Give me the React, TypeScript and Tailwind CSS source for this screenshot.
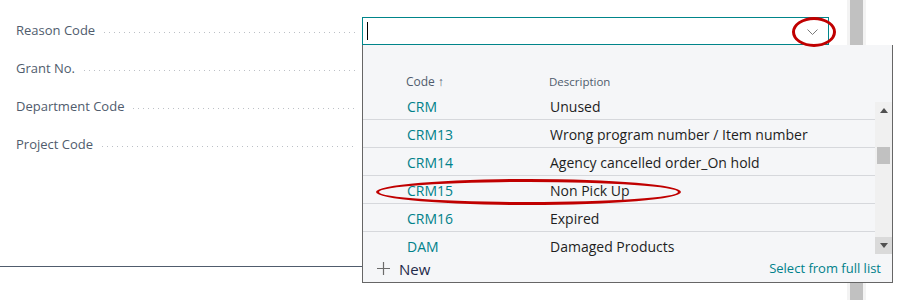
import React from "react";

const font = { fontFamily: '"Open Sans", "Noto Sans", Arial, sans-serif' };

const rows = [
  { code: "CRM", desc: "Unused" },
  { code: "CRM13", desc: "Wrong program number / Item number" },
  { code: "CRM14", desc: "Agency cancelled order_On hold" },
  { code: "CRM15", desc: "Non Pick Up" },
  { code: "CRM16", desc: "Expired" },
  { code: "DAM", desc: "Damaged Products" },
];

function Label({ text }: { text: string }) {
  return (
    <div className="flex items-center w-[346px] pr-[7px] h-full">
      <span className="text-[13px] text-[#505c6d] whitespace-nowrap">{text}</span>
      <div className="flex-1 ml-[9px] mt-[3px] h-[1px] bg-[linear-gradient(to_right,#bcc0c6_1px,transparent_1px)] bg-[length:5px_1px]" />
    </div>
  );
}

export default function App() {
  return (
    <div className="relative w-[901px] h-[300px] bg-white overflow-hidden" style={font}>
      <div className="flex h-full">
        <div className="w-[847px] h-[267px] border-b border-[#505c6d] pt-[12px] flex flex-col pl-[16px]">
          <div className="flex items-center h-[38px]">
            <Label text="Reason Code" />
            <div className="w-[467px] h-[29px] border border-b-2 border-[#00858a] flex items-center justify-between pl-[4px] pr-[4px]">
              <div className="w-[1px] h-[18px] bg-black" />
              <svg width="11" height="6" viewBox="0 0 11 6" className="mr-[6px] mt-[2px]">
                <path d="M0.5 0.5 L5.5 5.5 L10.5 0.5" fill="none" stroke="#7a7a7a" strokeWidth="1" />
              </svg>
            </div>
          </div>
          <div className="flex items-center h-[38px]">
            <Label text="Grant No." />
          </div>
          <div className="flex items-center h-[38px]">
            <Label text="Department Code" />
          </div>
          <div className="flex items-center h-[38px]">
            <Label text="Project Code" />
          </div>
        </div>
        <div className="w-[19px] h-full bg-[#f3f3f3] flex justify-center">
          <div className="w-[13px] h-full bg-[#c1c1c1]" />
        </div>
      </div>

      {/* dropdown overlay */}
      <div className="absolute left-[362px] top-[45px] w-[531px] h-[238px] bg-[#f5f6f8] border border-t-0 border-[#666666] flex flex-col">
        <div className="h-[47px] flex items-end pl-[43px] pb-[1px] text-[12px] text-[#505c6d]">
          <div className="w-[143px] flex items-center">
            Code <span className="ml-[3px] text-[#505c6d]">↑</span>
          </div>
          <div className="text-[11.5px]">Description</div>
        </div>
        <div className="flex h-[166px]">
          <div className="flex-1 overflow-hidden">
            {rows.map((r, i) => (
              <div
                key={r.code}
                className={`h-[28px] flex items-center pl-[44px] text-[14px] pt-[2px] ${i < rows.length - 1 ? "border-b border-[#d6d8dc]" : ""}`}
              >
                <div className="w-[143px] text-[#00818a]">{r.code}</div>
                <div className="text-[#1e1e1e]">{r.desc}</div>
              </div>
            ))}
          </div>
          <div className="w-[17px] mt-[10px] h-[152px] bg-[#f0f0f0] flex flex-col">
            <div className="h-[17px] flex items-center justify-center">
              <svg width="8" height="5" viewBox="0 0 8 5"><path d="M0 5 L4 0 L8 5 Z" fill="#505050" /></svg>
            </div>
            <div className="mt-[28px] mx-[2px] h-[17px] bg-[#c1c1c1]" />
            <div className="flex-1" />
            <div className="h-[17px] bg-[#dadada] flex items-center justify-center">
              <svg width="8" height="5" viewBox="0 0 8 5"><path d="M0 0 L4 5 L8 0 Z" fill="#505050" /></svg>
            </div>
          </div>
        </div>
        <div className="flex-1 flex items-center justify-between pl-[13px] pr-[11px] pb-[2px]">
          <div className="flex items-center">
            <svg width="15" height="15" viewBox="0 0 15 15">
              <path d="M7.5 1 V14 M1 7.5 H14" stroke="#6b6b6b" strokeWidth="1.2" />
            </svg>
            <span className="ml-[8px] text-[15px] text-[#1f2a4a]">New</span>
          </div>
          <span className="text-[13px] text-[#00818a]">Select from full list</span>
        </div>
      </div>

      {/* annotations */}
      <div className="absolute left-[792px] top-[17px] w-[44px] h-[30px] rounded-[50%] border-[3px] border-[#c00000]" />
      <div className="absolute left-[376px] top-[179px] w-[305px] h-[26px] rounded-[50%] border-[3px] border-[#c00000]" />
    </div>
  );
}
